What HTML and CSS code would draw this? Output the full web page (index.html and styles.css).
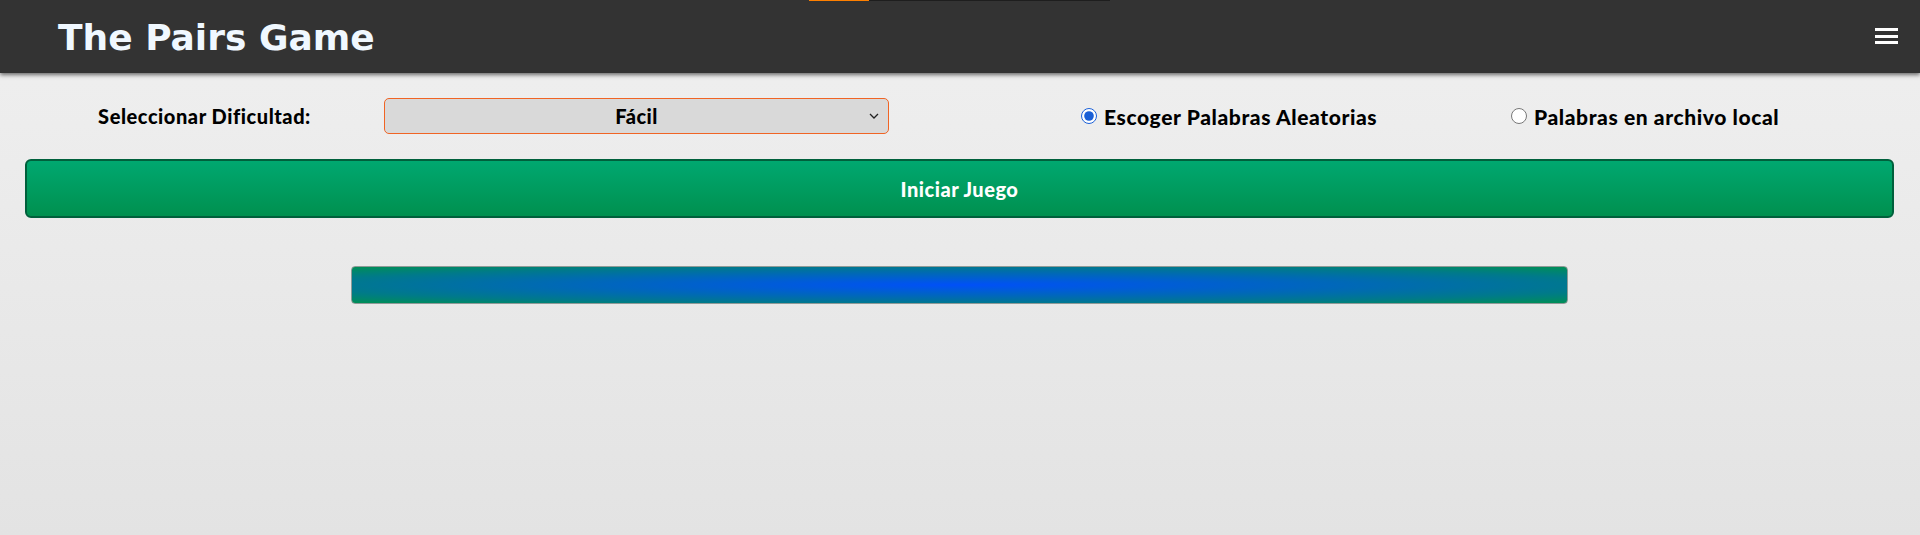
FILE: index.html
```html
<!DOCTYPE html>
<html lang="es">
<head>
<meta charset="utf-8">
<title>The Pairs Game</title>
<link rel="stylesheet" href="styles.css">
</head>
<body>
<header class="topbar">
  <div class="timer"><span class="timer-fill"></span><span class="timer-rest"></span></div>
  <h1 class="title">The Pairs Game</h1>
  <button class="menu" aria-label="Menú"><span></span><span></span><span></span></button>
</header>
<main class="content">
  <div class="options">
    <label class="diff-label" for="diff">Seleccionar Dificultad:</label>
    <div class="select-wrap">
      <select id="diff" class="diff-select">
        <option>Fácil</option>
        <option>Medio</option>
        <option>Difícil</option>
      </select>
      <svg class="chevron" width="10" height="6" viewBox="0 0 10 6"><path d="M1 1 L5 5 L9 1" fill="none" stroke="#222" stroke-width="1.3"/></svg>
    </div>
    <label class="radio radio-first"><input type="radio" name="src" checked> Escoger Palabras Aleatorias</label>
    <label class="radio"><input type="radio" name="src"> Palabras en archivo local</label>
  </div>
  <button class="start">Iniciar Juego</button>
  <div class="bar-wrap"><div class="bar"></div></div>
</main>
</body>
</html>
```

FILE: styles.css
```css
html, body {
  margin: 0;
  padding: 0;
}
body {
  min-height: 535px;
  background: linear-gradient(#f0f0f0, #e3e3e3);
  font-family: Lato, "Noto Sans", sans-serif;
  overflow: hidden;
}
.topbar {
  position: relative;
  height: 73px;
  background: #333333;
  box-shadow: 0 2px 4px rgba(0, 0, 0, 0.55);
  display: flex;
  align-items: center;
  justify-content: space-between;
  padding: 0 22px 0 58px;
}
.timer {
  position: absolute;
  top: 0;
  left: 809px;
  display: flex;
  height: 1px;
}
.timer-fill {
  width: 60px;
  background: #ff8000;
}
.timer-rest {
  width: 241px;
  background: #1e1e1e;
}
.title {
  margin: 0;
  font-family: "DejaVu Sans", Verdana, sans-serif;
  font-weight: bold;
  font-size: 36px;
  color: #f0f8ff;
  line-height: 1;
  padding-top: 2px;
}
.menu {
  background: none;
  border: 0;
  padding: 0;
  width: 23px;
  display: flex;
  flex-direction: column;
  gap: 3.3px;
  margin-top: -1px;
}
.menu span {
  display: block;
  height: 3px;
  background: #ffffff;
}
.content {
  padding: 25px 26px 0 25px;
}
.options {
  display: flex;
  align-items: center;
  height: 36px;
}
.diff-label {
  width: 359px;
  text-align: center;
  font-weight: 900;
  font-size: 20px;
  letter-spacing: 0.55px;
  color: #000;
}
.select-wrap {
  position: relative;
  width: 505px;
  height: 36px;
}
.diff-select {
  appearance: none;
  -webkit-appearance: none;
  width: 100%;
  height: 36px;
  background: #d9d9d9;
  border: 1px solid #f06424;
  border-radius: 5px;
  font-family: Lato, "Noto Sans", sans-serif;
  font-weight: 900;
  font-size: 20px;
  letter-spacing: 0.5px;
  color: #000;
  text-align: center;
  text-align-last: center;
  padding: 0 8px;
}
.chevron {
  position: absolute;
  right: 10px;
  top: 15px;
  pointer-events: none;
}
.radio {
  display: flex;
  align-items: center;
  font-weight: 900;
  font-size: 21px;
  letter-spacing: 0.6px;
  color: #000;
}
.radio input {
  width: 16px;
  height: 16px;
  margin: 0 7px 0 0;
  accent-color: #1a5fd6;
}
.radio-first {
  margin-left: 192px;
  width: 430px;
}
.start {
  display: block;
  width: 100%;
  height: 59px;
  margin-top: 25px;
  background: linear-gradient(#00a870, #00904f);
  border: 2px solid #00603c;
  border-radius: 6px;
  color: #ffffff;
  font-family: Lato, "Noto Sans", sans-serif;
  font-weight: 900;
  font-size: 20px;
  letter-spacing: 0.5px;
}
.bar-wrap {
  display: flex;
  justify-content: center;
  margin-top: 48px;
}
.bar {
  width: 65%;
  height: 36px;
  border: 1px solid #8f9a98;
  border-radius: 4px;
  background:
    radial-gradient(ellipse farthest-corner at 50% 50%, #0050f8 0%, #0068b8 45%, #007a8a 75%, #008f55 100%);
}
```
